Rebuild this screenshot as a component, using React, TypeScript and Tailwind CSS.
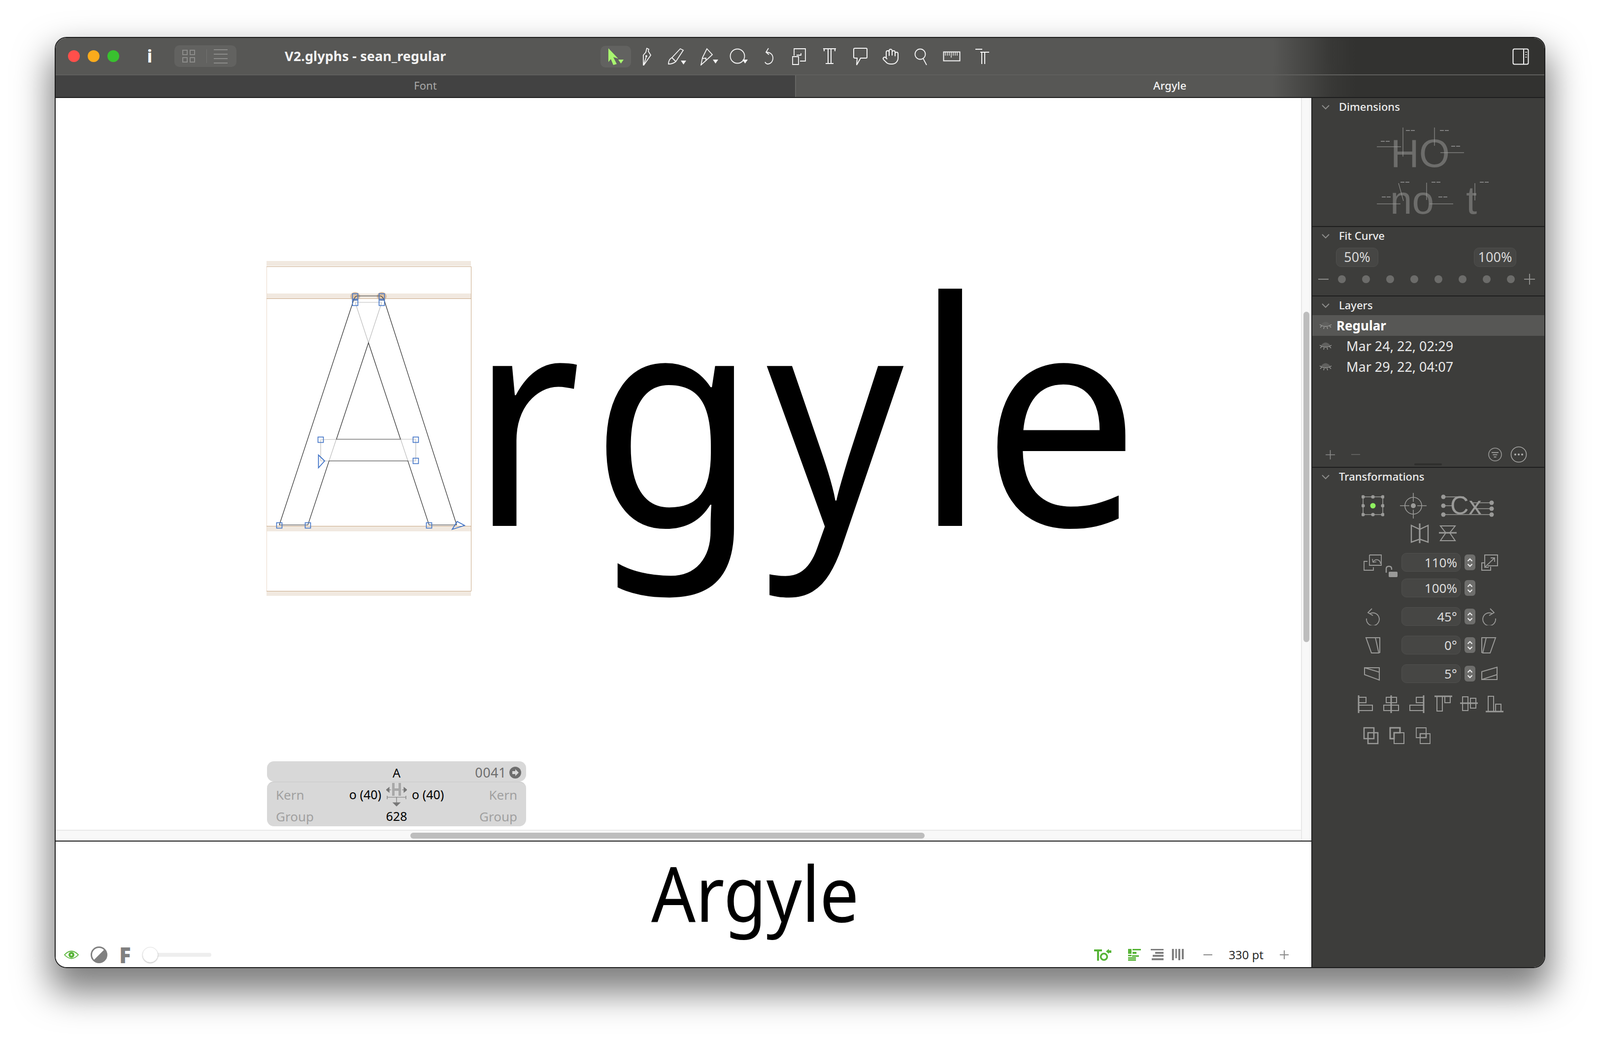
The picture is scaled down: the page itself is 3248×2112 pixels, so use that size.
import { Hand } from "lucide-react";
import type { ReactNode } from "react";

const blue = "#3f72c6";

// small square handle on the glyph outline
function Node({ x, y }: { x: number; y: number }) {
  return <rect x={x - 5.5} y={y - 5.5} width={11} height={11} fill="none" stroke={blue} strokeWidth={1.6} />;
}

function GlyphEditor() {
  const nodes = [
    [721, 601], [775, 601], [721, 614], [775, 614], [651, 892], [844, 892], [844, 935],
    [567, 1066], [625, 1066], [871, 1066],
  ];
  return (
    <svg className="absolute left-[428px] top-[331px]" width={416} height={680} viewBox="541 529 416 680">
      <rect x={541} y={529} width={415} height={10} fill="#f1e9e0" />
      <rect x={541} y={595} width={415} height={10} fill="#f1e9e0" />
      <rect x={541} y={1068} width={415} height={10} fill="#f1e9e0" />
      <rect x={541} y={1200} width={415} height={9} fill="#f1e9e0" />
      <rect x={540} y={540} width={2} height={660} fill="#ead9c8" />
      <path d="M541 540.5H956.5V1199.5H541M541 605.5H956M541 1067.5H956" fill="none" stroke="#c9a988" strokeWidth={1} />
      <ellipse cx={721} cy={601} rx={10} ry={9} fill="#dcc0a3" />
      <ellipse cx={775} cy={601} rx={10} ry={9} fill="#dcc0a3" />
      <path
        d="M721 613L748 695L828 935M775 613L748 695L668 935M683 891L651 892V935H668M813 891H844V935H828M721 613H775"
        fill="none"
        stroke="#bcbcbc"
        strokeWidth={1.2}
      />
      <path
        d="M927 1065L781 612Q777 600 772 600H725Q720 600 717 611L567 1065H625L668 935H828L871 1065H927"
        fill="none"
        stroke="#2a2a2a"
        strokeWidth={1.2}
      />
      <path d="M683 891H813L748 695Z" fill="none" stroke="#3a3a3a" strokeWidth={1.2} />
      {nodes.map(([x, y]) => (
        <Node key={`${x}-${y}`} x={x} y={y} />
      ))}
      <path d="M646.5 923L659 935L646.5 949Z" fill="none" stroke={blue} strokeWidth={1.8} />
      <path d="M918 1074L928 1058L943 1066Z" fill="none" stroke={blue} strokeWidth={1.8} />
    </svg>
  );
}

function Chevron() {
  return (
    <svg width={18} height={12} viewBox="0 0 18 12" className="shrink-0">
      <path d="M2 2L9 9L16 2" fill="none" stroke="#8d8d8b" strokeWidth={2} />
    </svg>
  );
}

function SectionHead({ title }: { title: string }) {
  return (
    <div className="flex h-[38px] items-center pl-[18px] text-[22px] font-medium text-[#ececec]">
      <Chevron />
      <span className="mb-[3px] ml-[18px]">{title}</span>
    </div>
  );
}

function ClosedEye() {
  return (
    <svg width={26} height={20} viewBox="0 0 26 20" className="shrink-0">
      <path d="M3 9Q13 -4 23 9Q13 14 3 9Z" fill="#60605e" />
      <path d="M1 8Q13 16 25 8M5 11L2 14M10 13L9 17M16 13L17 17M21 11L24 14" fill="none" stroke="#a2a2a0" strokeWidth={1.3} />
    </svg>
  );
}

function LayerRow({ label, active }: { label: string; active?: boolean }) {
  return (
    <div className={`flex h-[42px] items-center pl-[14px] ${active ? "bg-[#575755] text-[26px] font-bold text-white" : "text-[27px] text-[#e8e8e8]"}`}>
      <ClosedEye />
      <span className={active ? "ml-[9px]" : "ml-[29px]"}>{label}</span>
    </div>
  );
}

function Stepper() {
  return (
    <div className="ml-[8px] flex h-[32px] w-[22px] flex-col items-center justify-center gap-[3px] rounded-[6px] bg-[#6e6e6c]">
      <svg width={12} height={8} viewBox="0 0 12 8"><path d="M1.5 6.5L6 2L10.5 6.5" fill="none" stroke="#f0f0f0" strokeWidth={2} /></svg>
      <svg width={12} height={8} viewBox="0 0 12 8"><path d="M1.5 1.5L6 6L10.5 1.5" fill="none" stroke="#f0f0f0" strokeWidth={2} /></svg>
    </div>
  );
}

function Field({ value, left, right, lock }: { value: string; left?: ReactNode; right?: ReactNode; lock?: boolean }) {
  return (
    <div className="flex h-[38px] items-center">
      <div className="relative flex w-[77px] items-center justify-start">
        {left}
        {lock && (
          <svg className="absolute left-[44px] top-[24px]" width={26} height={26} viewBox="0 0 26 26">
            <path d="M2 15V7Q2 2 7.5 2Q13 2 13 7V9" fill="none" stroke="#9a9a98" strokeWidth={2.4} />
            <rect x={7} y={13} width={18} height={11} rx={2} fill="#9a9a98" />
          </svg>
        )}
      </div>
      <div className="flex h-[38px] w-[120px] items-center justify-end rounded-[10px] border border-[#50504e] bg-[#464644] pr-[6px] text-[26px] text-[#dcdcdc]">
        {value}
      </div>
      <Stepper />
      <div className="ml-[11px] flex items-center">{right}</div>
    </div>
  );
}

const stroke = { fill: "none", stroke: "#9a9a98", strokeWidth: 2 };

function Ico({ w, h, children }: { w: number; h: number; children: ReactNode }) {
  return (
    <svg width={w} height={h} viewBox={`0 0 ${w} ${h}`} className="shrink-0">
      {children}
    </svg>
  );
}

function AlignIcon({ line, rects }: { line: string; rects: number[][] }) {
  return (
    <Ico w={36} h={36}>
      <g {...stroke}>
        {rects.map((r) => (
          <rect key={r.join()} x={r[0]} y={r[1]} width={r[2]} height={r[3]} />
        ))}
      </g>
      <path d={line} fill="none" stroke="#9a9a98" strokeWidth={3} />
    </Ico>
  );
}

function ToolBox({ children, active }: { children: ReactNode; active?: boolean }) {
  return (
    <div className={`flex h-[44px] w-[62px] items-center justify-center ${active ? "rounded-[10px] bg-[#626260]" : ""}`}>{children}</div>
  );
}

const white = { fill: "none", stroke: "#f4f4f4", strokeWidth: 1.8 };
const Caret = ({ x, y }: { x: number; y: number }) => <path d={`M${x} ${y}h11l-5.5 8z`} fill="#f4f4f4" />;

function Toolbar() {
  return (
    <div className="ml-[315px] mt-[2px] flex items-center">
      <ToolBox active>
        <Ico w={34} h={36}>
          <path d="M2 1L22 22L12 19L19 33L12 35L7 23L2 29Z" fill="#a8f56f" />
          <path d="M22 24h11l-5.5 8z" fill="#a8f56f" />
        </Ico>
      </ToolBox>
      <ToolBox>
        <Ico w={24} h={36}>
          <path d="M13 1L17 3L16 7L21 15L7 35L6 35L6 15L11 9Z M7 34L12 18" {...white} />
          <circle cx={12} cy={17} r={2} fill="#f4f4f4" />
        </Ico>
      </ToolBox>
      <ToolBox>
        <Ico w={44} h={36}>
          <path d="M29 2L35 5L20 28Q14 33 5 33Q5 24 12 20Z M12 20L20 28" {...white} />
          <Caret x={30} y={26} />
        </Ico>
      </ToolBox>
      <ToolBox>
        <Ico w={44} h={36}>
          <path d="M21 2L32 14L19 26L9 35L12 20Z M11 22L19 21L19 26" {...white} />
          <Caret x={33} y={24} />
        </Ico>
      </ToolBox>
      <ToolBox>
        <Ico w={48} h={36}>
          <circle cx={23} cy={17} r={14.5} {...white} />
          <Caret x={33} y={24} />
        </Ico>
      </ToolBox>
      <ToolBox>
        <Ico w={24} h={36}>
          <path d="M12 1L7 9L13 14M7 9C15 9 21 13 21 21C21 29 15 33 11 33C8 33 6 31 5 29" {...white} />
        </Ico>
      </ToolBox>
      <ToolBox>
        <Ico w={32} h={36}>
          <path d="M6 16V2H29V27H18M3 18H15V34H3ZM11 15H20V11" {...white} />
        </Ico>
      </ToolBox>
      <ToolBox>
        <Ico w={32} h={36}>
          <path d="M3 2H29M5 2V7M27 2V7M13 2V31M19 2V31M8 32H24" {...white} strokeWidth={2} />
        </Ico>
      </ToolBox>
      <ToolBox>
        <Ico w={32} h={38}>
          <path d="M6 2H28Q30 2 30 4V20Q30 22 28 22H17L9 36L10 22H6Q3 22 3 20V4Q3 2 6 2Z" {...white} strokeWidth={2} />
        </Ico>
      </ToolBox>
      <ToolBox>
        <Hand size={36} color="#f4f4f4" strokeWidth={1.3} />
      </ToolBox>
      <ToolBox>
        <Ico w={30} h={36}>
          <circle cx={13} cy={13} r={10.5} {...white} />
          <path d="M19 22L26 35" {...white} />
        </Ico>
      </ToolBox>
      <ToolBox>
        <Ico w={36} h={22}>
          <rect x={1.5} y={1.5} width={33} height={18} {...white} strokeWidth={2} />
          <path d="M5 2V9M9 2V9M13 2V9M17 2V13M21 2V9M25 2V9M29 2V9" {...white} strokeWidth={1.4} />
        </Ico>
      </ToolBox>
      <ToolBox>
        <Ico w={32} h={34}>
          <path d="M2 2H16M12 8H30M15 8V32M21 8V32" {...white} strokeWidth={2} />
        </Ico>
      </ToolBox>
    </div>
  );
}

function TitleBar() {
  return (
    <div className="flex h-[76px] items-center border-b-2 border-[#5f5f5d] pl-[25px]">
      <div className="flex gap-[16px]">
        <div className="h-[24px] w-[24px] rounded-full bg-[#ff4f4b]" />
        <div className="h-[24px] w-[24px] rounded-full bg-[#fbab1c]" />
        <div className="h-[24px] w-[24px] rounded-full bg-[#39c12f]" />
      </div>
      <div className="ml-[47px] w-[30px] text-center font-['DejaVu_Serif',serif] text-[36px] font-bold leading-none text-white">i</div>
      <div className="ml-[35px] flex h-[44px] w-[126px] items-center rounded-[10px] bg-[#626260]">
        <div className="ml-[16px] grid grid-cols-2 gap-[4px]">
          {[0, 1, 2, 3].map((n) => (
            <div key={n} className="h-[11px] w-[11px] border-2 border-[#8c8c8a]" />
          ))}
        </div>
        <div className="ml-[23px] h-[28px] w-[1px] bg-[#737371]" />
        <div className="ml-[14px] flex flex-col gap-[7px]">
          {[0, 1, 2, 3].map((n) => (
            <div key={n} className="h-[2px] w-[28px] bg-[#8c8c8a]" />
          ))}
        </div>
      </div>
      <div className="ml-[98px] w-[326px] whitespace-nowrap text-[27px] font-bold tracking-[0.1px] text-[#f2f2f2]">V2.glyphs - sean_regular</div>
      <Toolbar />
      <div className="ml-auto mr-[31px] mt-[2px]">
        <svg width={34} height={34} viewBox="0 0 34 34">
          <rect x={1.5} y={1.5} width={31} height={31} rx={3} fill="none" stroke="#f4f4f4" strokeWidth={2} />
          <path d="M23 2V32" stroke="#f4f4f4" strokeWidth={2} />
          <path d="M26 8H30M26 13H30M26 18H30" stroke="#d8d8d8" strokeWidth={1.6} />
        </svg>
      </div>
    </div>
  );
}

function TabBar() {
  return (
    <div className="flex h-[44px] text-[22px]">
      <div className="flex w-[1501px] items-center justify-center bg-[#424242] pb-[3px] text-[#a8a8a8]">Font</div>
      <div className="flex flex-1 items-center border-l-2 border-[#666664] pb-[3px] pl-[725px] font-medium text-[#f4f4f4]">Argyle</div>
    </div>
  );
}

function Dimensions() {
  const dashes = [
    [2863, 264], [2932, 264], [2812, 286], [2955, 296], [2852, 369], [2915, 369], [3013, 369], [2814, 399], [2929, 399],
  ];
  return (
    <div className="h-[222px]">
      <svg width={471} height={222} viewBox="2664 236 471 222">
        <text x={2823} y={338} fontFamily="Liberation Sans" fontSize={80} fill="#6d6d6b">HO</text>
        <text x={2822} y={433} fontFamily="Liberation Sans" fontSize={80} fill="#6d6d6b">no</text>
        <text x={2976} y={433} fontFamily="Liberation Sans" fontSize={80} fill="#6d6d6b">t</text>
        <path
          d="M2848 258V317M2795 297H2844M2912 258V295M2924 309H2972M2839 371L2849 407M2896 370V405M2994 371V406M2795 413H2843M2902 413H2950"
          fill="none"
          stroke="#a0a09e"
          strokeWidth={1}
        />
        {dashes.map(([x, y]) => (
          <path key={`${x}-${y}`} d={`M${x - 9} ${y}h8M${x + 1} ${y}h8`} stroke="#808080" strokeWidth={2} />
        ))}
      </svg>
    </div>
  );
}

function FitCurve() {
  return (
    <div className="h-[141px] border-t-2 border-[#1e1e1e]">
      <SectionHead title="Fit Curve" />
      <div className="ml-[48px] mt-[4px] flex w-[366px] justify-between text-[27px] text-[#d8d8d8]">
        <div className="flex h-[39px] w-[86px] items-center justify-center rounded-[10px] border border-[#4f4f4d] bg-[#464644]">50%</div>
        <div className="flex h-[39px] w-[86px] items-center justify-center rounded-[10px] border border-[#4f4f4d] bg-[#464644]">100%</div>
      </div>
      <div className="ml-[12px] mt-[17px] flex h-[16px] items-center">
        <div className="h-[2px] w-[21px] bg-[#8d8d8b]" />
        <div className="ml-[19px] flex gap-[33px]">
          {[0, 1, 2, 3, 4, 5, 6, 7].map((n) => (
            <div key={n} className="h-[16px] w-[16px] rounded-full bg-[#6c6c6a]" />
          ))}
        </div>
        <svg className="ml-[19px]" width={22} height={22} viewBox="0 0 22 22">
          <path d="M0 11H22M11 0V22" stroke="#8d8d8b" strokeWidth={2} />
        </svg>
      </div>
    </div>
  );
}

function Layers() {
  return (
    <div className="relative flex h-[348px] flex-col border-t-2 border-[#1e1e1e]">
      <SectionHead title="Layers" />
      <LayerRow label="Regular" active />
      <LayerRow label="Mar 24, 22, 02:29" />
      <LayerRow label="Mar 29, 22, 04:07" />
      <div className="mt-auto mb-[8px] flex items-center pl-[27px] pr-[35px]">
        <svg width={19} height={19} viewBox="0 0 19 19"><path d="M0 9.5H19M9.5 0V19" stroke="#8d8d8b" strokeWidth={1.6} /></svg>
        <div className="ml-[33px] h-[2px] w-[18px] bg-[#5f5f5d]" />
        <svg className="ml-auto" width={30} height={32} viewBox="0 0 30 32">
          <circle cx={15} cy={16} r={13} fill="none" stroke="#9a9a98" strokeWidth={1.6} />
          <path d="M8 12H22M10.5 16.5H19.5M12.5 21H17.5" stroke="#9a9a98" strokeWidth={2} />
        </svg>
        <svg className="ml-[16px]" width={34} height={34} viewBox="0 0 34 34">
          <circle cx={17} cy={17} r={15.5} fill="none" stroke="#a8a8a6" strokeWidth={1.6} />
          <circle cx={10} cy={17} r={2} fill="#b0b0ae" />
          <circle cx={17} cy={17} r={2} fill="#b0b0ae" />
          <circle cx={24} cy={17} r={2} fill="#b0b0ae" />
        </svg>
      </div>
      <div className="absolute bottom-[3px] left-[207px] h-[4px] w-[56px] rounded-full bg-[#2f2f2d]" />
    </div>
  );
}

function Transformations() {
  const grey = "#9a9a98";
  return (
    <div className="flex-1 border-t-2 border-[#1e1e1e]">
      <SectionHead title="Transformations" />
      <div className="ml-[100px] mt-[13px] flex h-[52px] items-center">
        <Ico w={46} h={44}>
          <path d="M3 4H43V40H3Z" fill="none" stroke={grey} strokeWidth={1.6} />
          {[[3, 4], [23, 4], [43, 4], [3, 22], [43, 22], [3, 40], [23, 40], [43, 40]].map(([x, y]) => (
            <circle key={`${x}-${y}`} cx={x} cy={y} r={3.6} fill={grey} />
          ))}
          <circle cx={23} cy={22} r={5.5} fill="#8ff060" />
        </Ico>
        <div className="ml-[31px]">
          <Ico w={56} h={52}>
            <circle cx={28} cy={26} r={17} fill="none" stroke={grey} strokeWidth={1.6} />
            <circle cx={28} cy={26} r={5} fill={grey} />
            <path d="M1 26H20M36 26H55M28 0V18M28 34V52" stroke={grey} strokeWidth={1.6} />
          </Ico>
        </div>
        <div className="ml-[27px]">
          <Ico w={110} h={48}>
            <text x={20} y={41} fontFamily="Liberation Sans" fontSize={52} fill={grey}>Cx</text>
            <path d="M6 6H48M6 24H26M6 42H104M66 18H104M70 30H104" stroke={grey} strokeWidth={1.4} fill="none" />
            {[[6, 6], [6, 24], [6, 42], [104, 18], [104, 30], [104, 42]].map(([x, y]) => (
              <circle key={`${x}-${y}`} cx={x} cy={y} r={4.5} fill={grey} />
            ))}
          </Ico>
        </div>
      </div>
      <div className="ml-[199px] mt-[10px] flex h-[40px] items-center gap-[20px]">
        <Ico w={38} h={40}>
          <path d="M2 4L19 12V32L2 38ZM36 4L19 12V32L36 38Z" fill="none" stroke={grey} strokeWidth={2.4} />
          <path d="M19 0V40" stroke={grey} strokeWidth={3} />
        </Ico>
        <Ico w={36} h={34}>
          <path d="M3 2H33L22 16L33 32H3L14 16Z" fill="none" stroke={grey} strokeWidth={2} />
          <path d="M0 16H36" stroke={grey} strokeWidth={3} />
        </Ico>
      </div>
      <div className="ml-[104px] mt-[20px] flex flex-col">
        <Field
          value="110%"
          lock
          left={
            <Ico w={40} h={36}>
              <path d="M12 3H36V24H30M8 16H1V34H20V28M12 3V24H30" fill="none" stroke={grey} strokeWidth={1.8} />
              <path d="M19 18Q24 10 31 14Q35 17 34 21M19 18L18 11M19 18L26 17" fill="none" stroke={grey} strokeWidth={1.6} />
            </Ico>
          }
          right={
            <Ico w={36} h={34}>
              <path d="M8 24V2H34V24H14M8 18H2V33H20V26" fill="none" stroke={grey} strokeWidth={2} />
              <path d="M8 27L28 8M20 8H28V16M8 19V27H16" fill="none" stroke={grey} strokeWidth={1.8} />
            </Ico>
          }
        />
        <div className="mt-[14px]"><Field value="100%" /></div>
        <div className="mt-[20px]">
          <Field
            value="45°"
            left={
              <Ico w={36} h={36}>
                <path d="M6 22A13 13 0 1 0 13 12M17 2L9 10L19 16" fill="none" stroke={grey} strokeWidth={1.8} />
              </Ico>
            }
            right={
              <Ico w={36} h={36}>
                <path d="M30 22A13 13 0 1 1 23 12M19 2L27 10L17 16" fill="none" stroke={grey} strokeWidth={1.8} />
              </Ico>
            }
          />
        </div>
        <div className="mt-[20px]">
          <Field
            value="0°"
            left={
              <Ico w={36} h={34}>
                <path d="M3 2H22L29 33H14ZM22 2H31V33" fill="none" stroke={grey} strokeWidth={2} transform="translate(2 0)" />
              </Ico>
            }
            right={
              <Ico w={36} h={34}>
                <path d="M30 2H11L4 33H19ZM11 2H2V33" fill="none" stroke={grey} strokeWidth={2} />
              </Ico>
            }
          />
        </div>
        <div className="mt-[20px]">
          <Field
            value="5°"
            left={
              <Ico w={36} h={30}>
                <path d="M2 3L32 12V28L2 17ZM2 3H32V12" fill="none" stroke={grey} strokeWidth={2} />
              </Ico>
            }
            right={
              <Ico w={36} h={30}>
                <path d="M33 2L2 11V27L33 17ZM33 17V27H2" fill="none" stroke={grey} strokeWidth={2} />
              </Ico>
            }
          />
        </div>
      </div>
      <div className="ml-[92px] mt-[25px] flex gap-[16px]">
        <AlignIcon line="M2 0V36" rects={[[2, 4, 15, 11], [2, 20, 28, 11]]} />
        <AlignIcon line="M16 0V36" rects={[[6, 4, 21, 11], [1, 20, 30, 11]]} />
        <AlignIcon line="M30 0V36" rects={[[15, 4, 15, 11], [2, 20, 28, 11]]} />
        <AlignIcon line="M0 2H36" rects={[[5, 2, 11, 30], [21, 2, 11, 13]]} />
        <AlignIcon line="M0 16H36" rects={[[5, 3, 11, 28], [21, 6, 11, 20]]} />
        <AlignIcon line="M0 33H36" rects={[[5, 2, 11, 31], [20, 18, 11, 15]]} />
      </div>
      <div className="ml-[103px] mt-[28px] flex gap-[21px]">
        <Ico w={32} h={36}>
          <path d="M2 2H22V24H2ZM10 12H30V34H10Z" fill="none" stroke={grey} strokeWidth={2.6} />
        </Ico>
        <Ico w={32} h={36}>
          <path d="M2 2H22V12H10V24H2Z" fill="none" stroke={grey} strokeWidth={3} />
          <path d="M10 12H30V34H10Z" fill="none" stroke={grey} strokeWidth={2} />
        </Ico>
        <Ico w={32} h={36}>
          <path d="M2 2H22V22H2Z" fill="none" stroke={grey} strokeWidth={1.8} />
          <path d="M10 14H30V34H10Z" fill="none" stroke={grey} strokeWidth={1.8} />
          <path d="M10 14H22V22H10Z" fill="none" stroke={grey} strokeWidth={2.6} />
        </Ico>
      </div>
    </div>
  );
}

function InfoPanel() {
  const figures = "whitespace-pre font-['DejaVu_Sans',sans-serif] text-[25px] text-black";
  return (
    <div className="absolute left-[429px] top-[1347px] w-[526px]">
      <div className="grid h-[41px] grid-cols-[1fr_auto_1fr] items-center rounded-[14px] bg-[#d8d8d8] pl-[10px] pr-[10px] pt-[3px]">
        <div />
        <div className={figures}>A</div>
        <div className="flex items-center justify-end gap-[6px] text-[27px] tracking-[0.5px] text-[#6e6e6e]">
          0041
          <svg width={24} height={24} viewBox="0 0 24 24">
            <circle cx={12} cy={12} r={12} fill="#6e6e6e" />
            <path d="M12 5L19 12L12 19V15H6V9H12Z" fill="#d8d8d8" />
          </svg>
        </div>
      </div>
      <div className="grid h-[91px] grid-cols-[1fr_auto_1fr] items-center rounded-[14px] border-t-2 border-[#d0d0d0] bg-[#d8d8d8] px-[18px] text-[26px] text-[#a0a0a0]">
        <div className="pt-[2px]">Kern</div>
        <div className="flex items-center">
          <span className={figures}>o (40)</span>
          <svg className="mx-[10px]" width={42} height={48} viewBox="0 0 42 48">
            <rect x={12} y={0} width={5} height={26} fill="#a8a8a8" />
            <rect x={25} y={0} width={5} height={26} fill="#a8a8a8" />
            <rect x={12} y={11} width={18} height={5} fill="#a8a8a8" />
            <path d="M0 14L6 9V19ZM42 14L36 9V19ZM2 14H10M32 14H40M2 26V33M40 26V33M2 29H40M21 29V44M14 40H28L21 47Z" fill="#777" stroke="#777" strokeWidth={1.2} />
          </svg>
          <span className={figures}>o (40)</span>
        </div>
        <div className="pt-[2px] text-right">Kern</div>
        <div>Group</div>
        <div className={`text-center ${figures}`}>628</div>
        <div className="text-right">Group</div>
      </div>
    </div>
  );
}

function Canvas() {
  return (
    <div className="relative min-h-0 flex-1 overflow-hidden bg-white">
      <GlyphEditor />
      <div className="absolute left-[841px] top-[331px] flex origin-left scale-x-[0.9] whitespace-pre font-['DejaVu_Sans',sans-serif] text-[606px] leading-none text-black">
        <span>r</span>
        <span className="ml-[24px]">g</span>
        <span className="ml-[22px]">y</span>
        <span className="ml-[27px] origin-[50%_88.8%] scale-y-[1.046]">l</span>
        <span className="ml-[-6px] origin-left scale-x-[1.04]">e</span>
      </div>
      <InfoPanel />
    </div>
  );
}

function Preview() {
  return (
    <div className="flex h-[257px] flex-col border-t-2 border-[#1e1e1e] bg-white">
      <div className="pl-[1209px] pt-[25px] font-['DejaVu_Sans',sans-serif] text-[155px] leading-none text-black">
        <span className="inline-block origin-left scale-x-[0.91]">Argyle</span>
      </div>
      <div className="mt-[32px] flex h-[36px] items-center pl-[17px]">
        <svg width={30} height={20} viewBox="0 0 30 20">
          <path d="M1 10Q15 -5 29 10Q15 25 1 10Z" fill="none" stroke="#57b437" strokeWidth={1.8} />
          <circle cx={15} cy={10} r={6} fill="#57b437" />
          <circle cx={15} cy={10} r={1.8} fill="#fff" />
        </svg>
        <svg className="ml-[24px]" width={34} height={34} viewBox="0 0 34 34">
          <circle cx={17} cy={17} r={15.5} fill="#fff" stroke="#808080" strokeWidth={3} />
          <path d="M28 6A15.5 15.5 0 0 1 6 28Z" fill="#808080" />
        </svg>
        <span className="ml-[24px] w-[18px] text-[44px] font-black leading-none text-[#808080]">F</span>
        <div className="ml-[29px] flex items-center">
          <div className="z-10 h-[32px] w-[32px] rounded-full border border-[#e4e4e4] bg-white shadow-[0_1px_2px_rgba(0,0,0,0.25)]" />
          <div className="ml-[-4px] h-[8px] w-[112px] rounded-r-full bg-[#eeeeee]" />
        </div>
        <div className="ml-auto flex items-center pr-[46px]">
          <svg width={36} height={24} viewBox="0 0 36 24">
            <path d="M0 1H16V5H10V24H6V5H0Z" fill="#57b437" />
            <circle cx={20} cy={16} r={6.5} fill="none" stroke="#57b437" strokeWidth={3.5} />
            <path d="M24 5L30 0V3H35V8H30V10Z" fill="#57b437" />
          </svg>
          <svg className="ml-[33px]" width={28} height={24} viewBox="0 0 28 24" fill="#57b437">
            <path d="M0 0H7V10H0ZM9 0H26V3H9ZM9 6H17V10H9ZM0 12H7V15H0ZM0 17H16V20H0ZM8 13H22V16H8ZM0 21H16V24H0Z" />
          </svg>
          <svg className="ml-[18px]" width={28} height={24} viewBox="0 0 28 24" fill="#808080">
            <path d="M0 0H26V3H0ZM9 6H26V10H9ZM4 12H26V16H4ZM2 19H26V23H2Z" />
          </svg>
          <svg className="ml-[15px]" width={24} height={26} viewBox="0 0 24 26" fill="#808080">
            <path d="M0 1H4V24H0ZM7 1H10V20H7ZM13 1H17V24H13ZM20 1H24V22H20Z" />
          </svg>
          <div className="ml-[40px] h-[2px] w-[18px] bg-[#8a8a8a]" />
          <span className="ml-[33px] font-['Liberation_Sans',sans-serif] text-[24px] text-[#2a2a2a]">330 pt</span>
          <svg className="ml-[33px]" width={18} height={18} viewBox="0 0 18 18">
            <path d="M0 9H18M9 0V18" stroke="#8a8a8a" strokeWidth={2} />
          </svg>
        </div>
      </div>
    </div>
  );
}

export default function App() {
  return (
    <div className="h-[2112px] w-[3248px] bg-white pl-[111px] pt-[75px] font-['Inter',sans-serif]">
      <div className="flex h-[1891px] w-[3026px] flex-col overflow-hidden rounded-[24px] border-2 border-[#1c1c1c] shadow-[0_40px_70px_10px_rgba(0,0,0,0.5)]">
        <div className="bg-[linear-gradient(90deg,#575755_2470px,#383836_2590px,#323230_2640px)]">
          <TitleBar />
          <TabBar />
        </div>
        <div className="flex min-h-0 flex-1 border-t-2 border-[#1e1e1e]">
          <div className="flex w-[2549px] flex-col">
            <div className="flex min-h-0 flex-1">
              <div className="flex flex-1 flex-col">
                <Canvas />
                <div className="h-[22px] border-t-2 border-[#e8e8e8] bg-[#f8f8f8] pt-[4px]">
                  <div className="ml-[720px] h-[12px] w-[1044px] rounded-full bg-[#bdbdbd]" />
                </div>
              </div>
              <div className="w-[21px] border-l-2 border-[#e8e8e8] bg-[#f8f8f8] pl-[3px] pt-[434px]">
                <div className="h-[671px] w-[12px] rounded-full bg-[#bdbdbd]" />
              </div>
            </div>
            <Preview />
          </div>
          <div className="flex w-[473px] flex-col border-l-2 border-[#1e1e1e] bg-[#3d3d3b] text-white">
            <SectionHead title="Dimensions" />
            <Dimensions />
            <FitCurve />
            <Layers />
            <Transformations />
          </div>
        </div>
      </div>
    </div>
  );
}
